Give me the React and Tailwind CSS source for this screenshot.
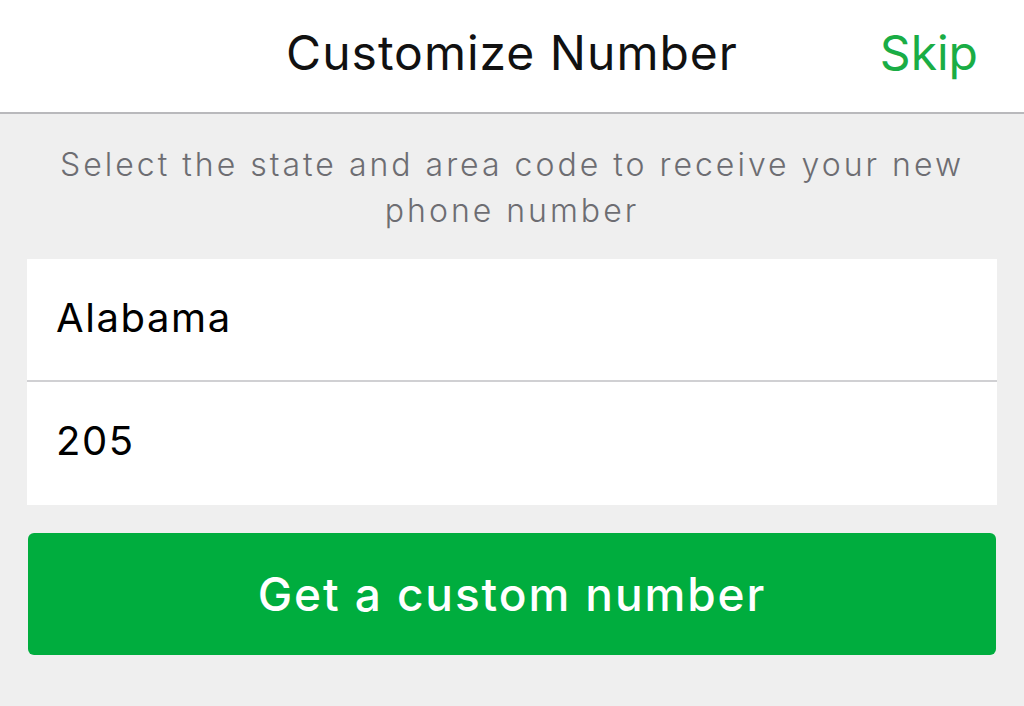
export default function App() {
  return (
    <div className="w-[1024px] h-[706px] bg-[#efefef] flex flex-col" style={{ fontFamily: 'Inter, "Liberation Sans", Arial, sans-serif' }}>
      <div className="h-[114px] bg-white border-b-2 border-[#b9b9bc] relative flex items-center justify-center shrink-0">
        <div className="text-[48px] font-normal tracking-[1px] text-[#111] leading-none pb-[6px]">Customize Number</div>
        <div className="absolute right-[46px] top-0 h-full flex items-center pb-[6px] text-[48px] text-[#1aad45] leading-none">Skip</div>
      </div>
      <div className="px-[20px] pt-[28px] text-center text-[32px] font-light tracking-[3px] leading-[46px] text-[#6d6d72]">
        Select the state and area code to receive your new<br />phone number
      </div>
      <div className="mx-[27px] mt-[25px] bg-white">
        <div className="h-[123px] flex items-center pl-[29px] pb-[4px] text-[40px] tracking-[1.6px] text-black border-b-2 border-[#d0d0d3]">Alabama</div>
        <div className="h-[123px] flex items-center pl-[29px] pb-[5px] text-[40px] tracking-[1.6px] text-black">205</div>
      </div>
      <div className="mx-[28px] mt-[28px] h-[122px] rounded-[6px] bg-[#00ad3e] flex items-center justify-center text-[46px] font-medium tracking-[1.9px] text-white">
        Get a custom number
      </div>
    </div>
  );
}
